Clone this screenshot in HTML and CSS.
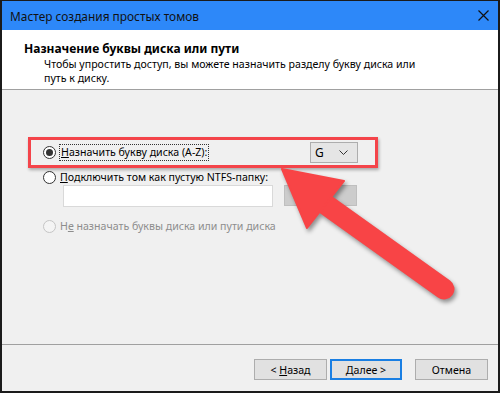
FILE: index.html
```html
<!DOCTYPE html>
<html lang="ru">
<head>
  <meta charset="UTF-8">
  <title>Мастер создания простых томов</title>
  <link rel="stylesheet" href="styles.css">
</head>
<body>
  <div class="window">
    <!-- заголовок окна -->
    <div class="titlebar">
      <span class="title">Мастер создания простых томов</span>
      <svg class="close" width="11" height="11" viewBox="0 0 11 11">
        <path d="M0.5 0.5 L10.5 10.5 M10.5 0.5 L0.5 10.5" stroke="#111" stroke-width="1.2" fill="none"/>
      </svg>
    </div>

    <!-- шапка мастера -->
    <div class="header">
      <div class="header-title">Назначение буквы диска или пути</div>
      <div class="header-desc">Чтобы упростить доступ, вы можете назначить разделу букву диска или<br>путь к диску.</div>
    </div>

    <!-- варианты -->
    <div class="content">
      <div class="option option-letter">
        <div class="radio-label">
          <span class="radio checked"></span>
          <span class="focus"><u>Н</u>азначить букву диска (A-Z):</span>
        </div>
        <div class="combo">
          <span>G</span>
          <svg width="9" height="5" viewBox="0 0 9 5">
            <path d="M0.5 0.5 L4.5 4.5 L8.5 0.5" stroke="#333" stroke-width="1" fill="none"/>
          </svg>
        </div>
      </div>
      <div class="option">
        <span class="radio"></span>
        <span><u>П</u>одключить том как пустую NTFS-папку:</span>
      </div>
      <div class="folder-row">
        <div class="textbox"></div>
        <div class="btn btn-disabled"></div>
      </div>
      <div class="option option-disabled">
        <span class="radio"></span>
        <span>Н<u>е</u> назначать буквы диска или пути диска</span>
      </div>
    </div>

    <!-- кнопки -->
    <div class="footer">
      <div class="btn"><span>&lt; <u>Н</u>азад</span></div>
      <div class="btn btn-default"><span><u>Д</u>алее &gt;</span></div>
      <div class="btn btn-cancel"><span>Отмена</span></div>
    </div>

    <!-- пометки поверх скриншота -->
    <div class="highlight"></div>
    <svg class="arrow" width="500" height="393" viewBox="0 0 500 393">
      <g fill="#f84446" stroke="#f84446">
        <line x1="318" y1="199" x2="444" y2="289" stroke-width="21" stroke-linecap="round"/>
        <polygon points="282,169 344,181 307,228" stroke-width="2" stroke-linejoin="round"/>
      </g>
    </svg>
  </div>
</body>
</html>
```

FILE: styles.css
```css
html, body {
  margin: 0;
  padding: 0;
  background: #ffffff;
}
* {
  box-sizing: border-box;
}
.window {
  position: relative;
  width: 500px;
  height: 393px;
  border: 2px solid #1b1b1b;
  border-top-width: 1px;
  background: #f0f0f0;
  display: flex;
  flex-direction: column;
  font-family: 'Noto Sans', sans-serif;
  font-size: 10.6px;
  color: #000;
}
/* заголовок окна */
.titlebar {
  height: 29px;
  background: #2d88f9;
  display: flex;
  align-items: center;
  justify-content: space-between;
  padding: 0 9px 0 8px;
}
.title {
  font-size: 11.9px;
  color: #111;
}
/* шапка */
.header {
  height: 60px;
  background: #fff;
  border-bottom: 1px solid #a0a0a0;
  padding: 11px 0 0 22px;
}
.header-title {
  font-weight: 700;
  font-size: 12px;
  line-height: 15px;
}
.header-desc {
  padding-left: 20px;
  line-height: 14px;
  margin-top: 1px;
}
/* варианты */
.content {
  flex: 1;
  padding: 51px 0 0 41px;
}
.option {
  display: flex;
  align-items: center;
  gap: 4px;
  height: 14px;
}
.option-letter {
  width: 315px;
  height: 22px;
  justify-content: space-between;
  margin-bottom: 7px;
}
.radio-label {
  display: flex;
  align-items: center;
  gap: 3px;
}
.radio {
  width: 13px;
  height: 13px;
  border: 1px solid #333;
  border-radius: 50%;
  background: #fff;
  display: flex;
  align-items: center;
  justify-content: center;
}
.radio.checked::after {
  content: '';
  width: 7px;
  height: 7px;
  border-radius: 50%;
  background: #333;
}
.focus {
  border: 1px dotted #333;
  padding: 0 1px;
  line-height: 15px;
}
.combo {
  width: 48px;
  height: 21px;
  background: #e5e5e5;
  border: 1px solid #adadad;
  display: flex;
  align-items: center;
  justify-content: space-between;
  padding: 0 9px 0 4px;
  font-size: 12px;
}
.folder-row {
  display: flex;
  gap: 11px;
  margin: 1px 0 0 20px;
}
.textbox {
  width: 210px;
  height: 22px;
  background: #fff;
  border: 1px solid #d9d9d9;
}
.option-disabled {
  margin-top: 12px;
  color: #8d8d8d;
}
.option-disabled .radio {
  border-color: #c5c5c5;
  background: #f4f4f4;
}
/* кнопки */
.footer {
  height: 47px;
  border-top: 1px solid #a0a0a0;
  display: flex;
  justify-content: flex-end;
  gap: 3px;
  padding: 14px 10px 0 0;
}
.btn {
  width: 73px;
  height: 21px;
  background: #e1e1e1;
  border: 1px solid #adadad;
  display: flex;
  align-items: center;
  justify-content: center;
  white-space: pre;
}
.btn-default {
  width: 72px;
  border: 2px solid #1a7fe3;
}
.btn-cancel {
  margin-left: 10px;
}
.btn-disabled {
  background: #cccccc;
  border-color: #bfbfbf;
}
/* пометки */
.highlight {
  position: absolute;
  left: 26px;
  top: 136px;
  width: 350px;
  height: 31px;
  border: 3px solid #f4444a;
  box-shadow: 1px 2px 3px rgba(0, 0, 0, 0.3);
}
.arrow {
  position: absolute;
  left: -2px;
  top: -1px;
  pointer-events: none;
  filter: drop-shadow(2px 3px 2px rgba(0, 0, 0, 0.4));
}
```
